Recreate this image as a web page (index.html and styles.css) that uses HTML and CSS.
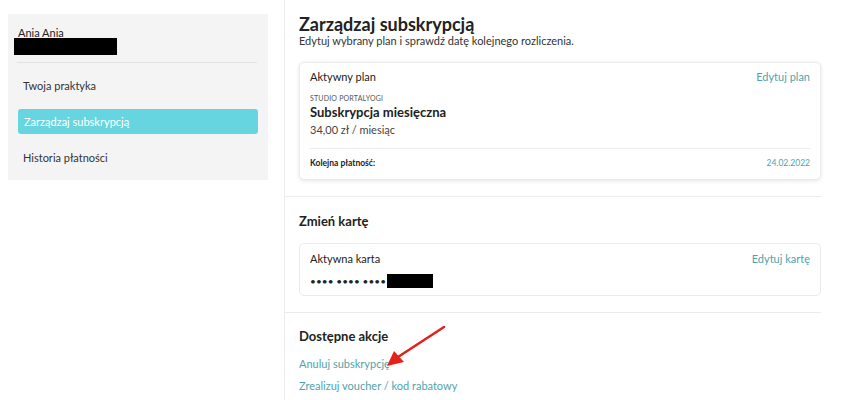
FILE: index.html
```html
<!DOCTYPE html>
<html lang="pl">
<head>
<meta charset="utf-8">
<link rel="stylesheet" href="styles.css">
</head>
<body>
<div class="page">
  <aside class="side-col">
    <div class="sidebar">
      <div class="user-name">Ania Ania</div>
      <div class="redact redact-email"></div>
      <div class="side-divider"></div>
      <nav class="nav">
        <div class="nav-item">Twoja praktyka</div>
        <div class="nav-item active">Zarządzaj subskrypcją</div>
        <div class="nav-item">Historia płatności</div>
      </nav>
    </div>
  </aside>
  <main class="main">
    <section class="section first">
      <h1 class="title">Zarządzaj subskrypcją</h1>
      <p class="subtitle">Edytuj wybrany plan i sprawdź datę kolejnego rozliczenia.</p>
      <div class="card plan-card">
        <div class="card-head">
          <span class="card-label">Aktywny plan</span>
          <span class="link">Edytuj plan</span>
        </div>
        <div class="studio">STUDIO PORTALYOGI</div>
        <div class="plan-name">Subskrypcja miesięczna</div>
        <div class="price">34,00 zł / miesiąc</div>
        <div class="card-divider"></div>
        <div class="next-row">
          <span class="next-label">Kolejna płatność:</span>
          <span class="next-date">24.02.2022</span>
        </div>
      </div>
    </section>
    <section class="section">
      <h2 class="heading">Zmień kartę</h2>
      <div class="card card-card">
        <div class="card-head">
          <span class="card-label">Aktywna karta</span>
          <span class="link">Edytuj kartę</span>
        </div>
        <div class="card-number"><span class="dots">•••• •••• ••••</span><span class="redact redact-card"></span></div>
      </div>
    </section>
    <section class="section actions">
      <h2 class="heading">Dostępne akcje</h2>
      <div class="action link">Anuluj subskrypcję</div>
      <div class="action link second">Zrealizuj voucher / kod rabatowy</div>
      <svg class="arrow" width="70" height="50" viewBox="0 0 70 50">
        <line x1="66" y1="3" x2="20" y2="33" stroke="#e3231b" stroke-width="2.6" stroke-linecap="round"/>
        <polygon points="9,42 16,27 26,38" fill="#e3231b"/>
      </svg>
    </section>
  </main>
</div>
</body>
</html>
```
FILE: styles.css
```css
* { box-sizing: border-box; }
html, body { margin: 0; padding: 0; background: #fff; }
body {
  font-family: Lato, "Open Sans", "Liberation Sans", sans-serif;
  color: #333;
  width: 850px;
  height: 400px;
  overflow: hidden;
}
.page { display: flex; height: 400px; }

.side-col { width: 284px; flex: none; padding: 14px 0 0 8px; }
.sidebar {
  width: 260px;
  background: #f4f4f4;
  padding: 13px 10px 10px 10px;
}
.user-name { font-size: 11px; line-height: 12px; color: #222; }
.redact { background: #000; display: block; }
.redact-email { width: 103px; height: 17px; margin: -1px 0 0 -4px; }
.side-divider { height: 1px; background: #e2e2e2; margin: 7px 1px 0 -1px; }
.nav { display: flex; flex-direction: column; gap: 11px; margin-top: 10px; }
.nav-item {
  height: 25px;
  line-height: 25px;
  padding-left: 5px;
  font-size: 11px;
  color: #333;
  border-radius: 3px;
}
.nav-item.active { background: #67d5df; color: #fff; padding-left: 6px; }

.main {
  width: 537px;
  flex: none;
  border-left: 1px solid #ececec;
  position: relative;
}
.section { padding: 16px 0 16px 14px; border-bottom: 1px solid #ececec; }
.section.first { padding-top: 13px; }
.section.actions { border-bottom: none; position: relative; padding-top: 15px; }
.title { margin: 0; font-size: 18px; line-height: 22px; font-weight: 700; color: #222; }
.subtitle { margin: 0; font-size: 11px; line-height: 12px; color: #333; }
.card {
  width: 522px;
  border: 1px solid #ebebeb;
  border-radius: 5px;
  background: #fff;
  padding: 0 10px;
}
.plan-card {
  margin-top: 15px;
  padding-top: 7px;
  padding-bottom: 10px;
  box-shadow: 0 1px 4px rgba(0,0,0,0.10);
}
.card-head { display: flex; justify-content: space-between; align-items: center; }
.card-label { font-size: 11px; line-height: 14px; color: #222; }
.link { color: #4fa4ac; font-size: 11px; line-height: 14px; }
.studio { font-size: 7px; line-height: 10px; margin-top: 9px; color: #555; letter-spacing: 0.2px; }
.plan-name { font-size: 13px; line-height: 16px; font-weight: 700; color: #222; margin-top: 1px; }
.price { font-size: 11px; line-height: 14px; margin-top: 3px; color: #444; }
.card-divider { height: 1px; background: #ececec; margin-top: 11px; }
.next-row { display: flex; justify-content: space-between; align-items: center; margin-top: 8px; line-height: 12px; }
.next-label { font-size: 8.5px; font-weight: 700; color: #222; }
.next-date { font-size: 8.5px; color: #4fa4ac; }

.heading { margin: 0; font-size: 13px; line-height: 16px; font-weight: 700; color: #222; }
.card-card { margin-top: 14px; padding-top: 8px; padding-bottom: 7px; }
.card-number { display: flex; align-items: center; margin-top: 8px; height: 14px; }
.dots { font-size: 10px; line-height: 14px; color: #222; letter-spacing: 0.1px; }
.redact-card { width: 46px; height: 14px; margin-left: 1px; }

.action { margin-top: 13px; }
.action.second { margin-top: 8px; }
.arrow { position: absolute; left: 93px; top: 11px; }
```
